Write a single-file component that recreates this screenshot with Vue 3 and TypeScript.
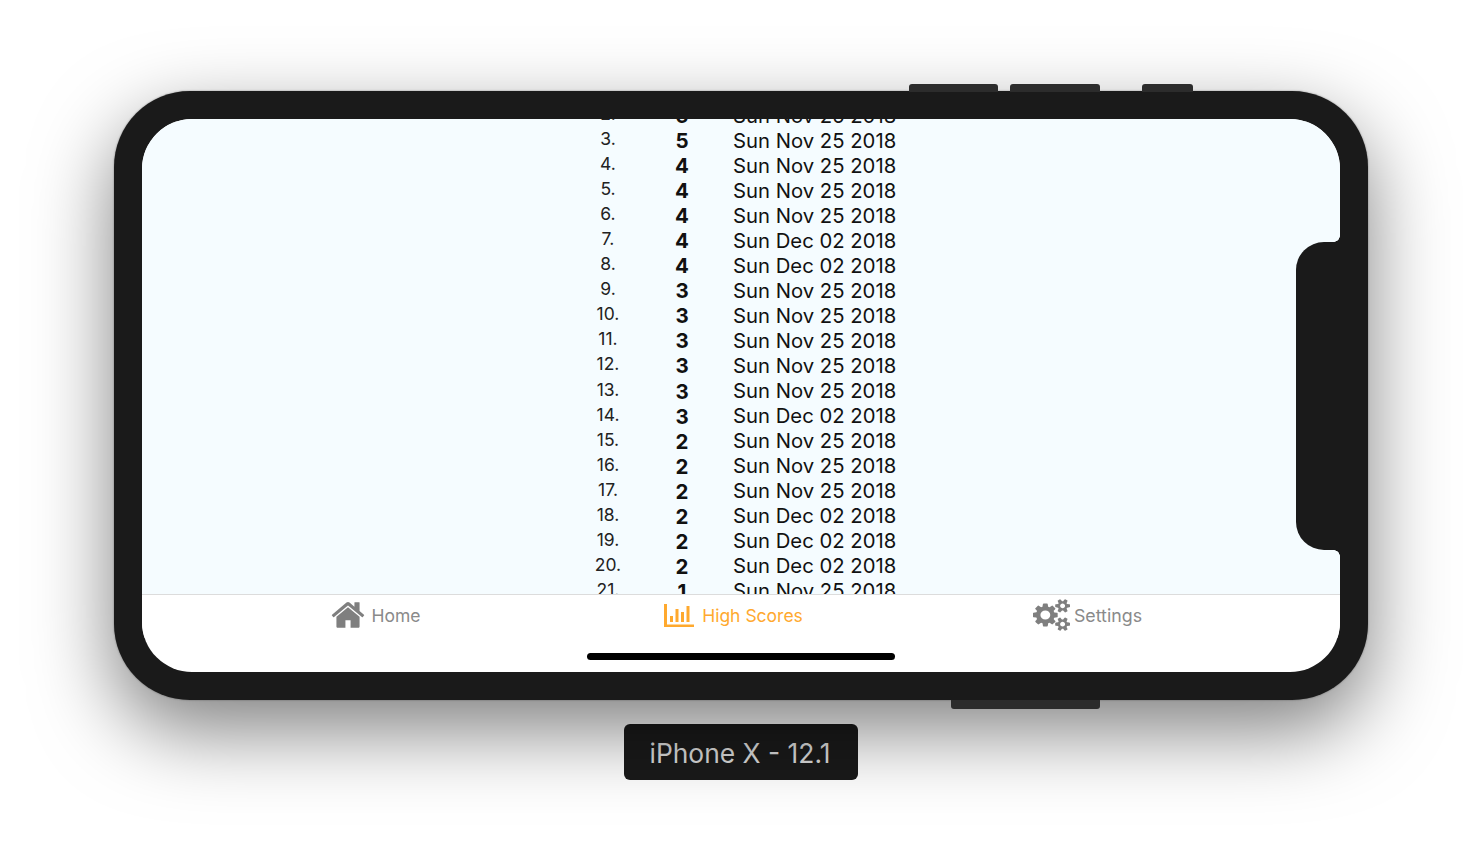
<script setup lang="ts">
interface Row { rank: number; score: number; date: string }
const nov = 'Sun Nov 25 2018'
const dec = 'Sun Dec 02 2018'
const rows: Row[] = [
  { rank: 2, score: 6, date: nov },
  { rank: 3, score: 5, date: nov },
  { rank: 4, score: 4, date: nov },
  { rank: 5, score: 4, date: nov },
  { rank: 6, score: 4, date: nov },
  { rank: 7, score: 4, date: dec },
  { rank: 8, score: 4, date: dec },
  { rank: 9, score: 3, date: nov },
  { rank: 10, score: 3, date: nov },
  { rank: 11, score: 3, date: nov },
  { rank: 12, score: 3, date: nov },
  { rank: 13, score: 3, date: nov },
  { rank: 14, score: 3, date: dec },
  { rank: 15, score: 2, date: nov },
  { rank: 16, score: 2, date: nov },
  { rank: 17, score: 2, date: nov },
  { rank: 18, score: 2, date: dec },
  { rank: 19, score: 2, date: dec },
  { rank: 20, score: 2, date: dec },
  { rank: 21, score: 1, date: nov },
]
</script>

<template>
  <main class="stage">
    <div class="device">
      <span class="btn btn-a"></span>
      <span class="btn btn-b"></span>
      <span class="btn btn-c"></span>
      <span class="btn-bottom"></span>
      <div class="screen">
        <div class="list">
          <div v-for="r in rows" :key="r.rank" class="row">
            <span class="rank">{{ r.rank }}.</span>
            <span class="score">{{ r.score }}</span>
            <span class="date">{{ r.date }}</span>
          </div>
        </div>
        <nav class="tabs">
          <div class="tab">
            <svg class="ico-home" viewBox="0 0 1792 1792"><path d="M1472 992v480q0 26-19 45t-45 19h-384v-384h-256v384h-384q-26 0-45-19t-19-45v-480q0-1 .5-3t.5-3l575-474 575 474q1 2 1 6zm223-69l-62 74q-8 9-21 11h-3q-13 0-21-7l-692-577-692 577q-12 8-24 7-13-2-21-11l-62-74q-8-10-7-23.5t11-21.5l719-599q32-26 76-26t76 26l244 204v-195q0-14 9-23t23-9h192q14 0 23 9t9 23v408l219 182q10 8 11 21.5t-7 23.5z"/></svg>
            <span>Home</span>
          </div>
          <div class="tab active">
            <svg class="ico-chart" viewBox="0 0 30 23"><path d="M0 0h3v20.5h27V23H0z"/><rect x="6" y="12" width="3" height="6"/><rect x="11.5" y="5" width="3" height="13"/><rect x="17" y="8" width="3" height="10"/><rect x="22.5" y="2" width="3" height="16"/></svg>
            <span>High Scores</span>
          </div>
          <div class="tab tab-settings">
            <svg class="ico-cogs" viewBox="0 0 1920 1792" preserveAspectRatio="none"><path d="M896 896q0-106-75-181t-181-75-181 75-75 181 75 181 181 75 181-75 75-181zm768 512q0-52-38-90t-90-38-90 38-38 90q0 53 37.5 90.5t90.5 37.5 90.5-37.5 37.5-90.5zm0-1024q0-52-38-90t-90-38-90 38-38 90q0 53 37.5 90.5t90.5 37.5 90.5-37.5 37.5-90.5zm-384 421v185q0 10-7 19.5t-16 10.5l-155 24q-11 35-32 76 34 48 90 115 7 11 7 20 0 12-7 19-23 30-82.5 89.5t-78.5 59.5q-11 0-21-7l-115-90q-37 19-77 31-11 108-23 155-7 24-30 24h-186q-11 0-20-7.5t-10-17.5l-23-153q-34-10-75-31l-118 89q-7 7-20 7-11 0-21-8-144-133-144-160 0-9 7-19 10-14 41-53t47-61q-23-44-35-82l-152-24q-10-1-17-9.5t-7-19.5v-185q0-10 7-19.5t16-10.5l155-24q11-35 32-76-34-48-90-115-7-11-7-20 0-12 7-20 22-30 82-89t79-59q11 0 21 7l115 90q34-18 77-32 11-108 23-154 7-24 30-24h186q11 0 20 7.5t10 17.5l23 153q34 10 75 31l118-89q8-7 20-7 11 0 21 8 144 133 144 160 0 8-7 19-12 16-42 54t-45 60q23 48 34 82l152 23q10 2 17 10.5t7 19.5zm640 533v140q0 16-149 31-12 27-30 52 51 113 51 138 0 4-4 7-122 71-124 71-8 0-46-47t-52-68q-20 2-30 2t-30-2q-14 21-52 68t-46 47q-2 0-124-71-4-3-4-7 0-25 51-138-18-25-30-52-149-15-149-31v-140q0-16 149-31 13-29 30-52-51-113-51-138 0-4 4-7 4-2 35-20t59-34 30-16q8 0 46 46.5t52 67.5q20-2 30-2t30 2q51-71 92-112l6-2q4 0 124 70 4 3 4 7 0 25-51 138 17 23 30 52 149 15 149 31zm0-1024v140q0 16-149 31-12 27-30 52 51 113 51 138 0 4-4 7-122 71-124 71-8 0-46-47t-52-68q-20 2-30 2t-30-2q-14 21-52 68t-46 47q-2 0-124-71-4-3-4-7 0-25 51-138-18-25-30-52-149-15-149-31v-140q0-16 149-31 13-29 30-52-51-113-51-138 0-4 4-7 4-2 35-20t59-34 30-16q8 0 46 46.5t52 67.5q20-2 30-2t30 2q51-71 92-112l6-2q4 0 124 70 4 3 4 7 0 25-51 138 17 23 30 52 149 15 149 31z"/></svg>
            <span>Settings</span>
          </div>
        </nav>
        <div class="home-strip"><span class="home-bar"></span></div>
        <div class="notch"></div>
      </div>
    </div>
    <div class="label">iPhone X - 12.1</div>
  </main>
</template>

<style>
html, body { margin: 0; background: #fff; overflow: hidden; }
</style>

<style scoped>
.stage {
  width: 1482px;
  height: 864px;
  box-sizing: border-box;
  padding-top: 91px;
  display: flex;
  flex-direction: column;
  align-items: center;
  font-family: Inter, "Liberation Sans", sans-serif;
}
.device {
  position: relative;
  width: 1254px;
  height: 609px;
  box-sizing: border-box;
  padding: 28px;
  background: #1a1a1a;
  border-radius: 76px;
  box-shadow: 0 30px 80px rgba(0, 0, 0, 0.5), 0 0 2px rgba(0, 0, 0, 0.4);
}
.btn {
  position: absolute;
  top: -7px;
  height: 8px;
  background: #2c2c2c;
  border-radius: 3px 3px 0 0;
}
.btn-a { left: 795px; width: 89px; }
.btn-b { left: 896px; width: 90px; }
.btn-c { left: 1028px; width: 51px; }
.btn-bottom {
  position: absolute;
  left: 837px;
  bottom: -9px;
  width: 149px;
  height: 9px;
  background: #2c2c2c;
  border-radius: 0 0 3px 3px;
}
.screen {
  position: relative;
  height: 553px;
  overflow: hidden;
  background: #fff;
  border-radius: 50px;
  display: flex;
  flex-direction: column;
}
.list {
  height: 475px;
  flex: none;
  overflow: hidden;
  background: #f5fcff;
  padding-left: 442px;
}
.row {
  display: grid;
  grid-template-columns: 48px 100px auto;
  height: 25.06px;
  align-items: center;
  position: relative;
  top: -16px;
  color: #000;
}
.rank {
  font-size: 17.5px;
  text-align: center;
  color: #222;
  margin-top: -4px;
}
.score {
  font-size: 20.5px;
  font-weight: 700;
  text-align: center;
  color: #111;
}
.date {
  font-size: 20.3px;
  padding-left: 1px;
  margin-top: -1px;
  white-space: nowrap;
  color: #111;
}
.tabs {
  height: 43px;
  flex: none;
  display: grid;
  grid-template-columns: repeat(3, 357px);
  padding-left: 56px;
  border-top: 1px solid #dcdcdc;
  background: #fff;
}
.tab {
  display: flex;
  align-items: center;
  justify-content: center;
  gap: 5px;
  color: #8a8a8a;
  font-size: 17.5px;
  height: 40px;
}
.tab svg { fill: #7f7f7f; flex: none; }
.tab.active { color: #ffa92e; }
.tab.active svg { fill: #ffa92e; }
.tab-settings { padding-right: 6px; gap: 4px; font-size: 17.8px; }
.ico-home { width: 36px; height: 36px; margin-left: -2px; }
.ico-chart { width: 30px; height: 23px; margin-right: 3px; }
.ico-cogs { width: 37px; height: 32px; }
.home-strip {
  flex: 1;
  display: flex;
  justify-content: center;
  padding-top: 15px;
}
.home-bar {
  width: 308px;
  height: 7px;
  background: #000;
  border-radius: 4px;
}
.notch {
  position: absolute;
  right: 0;
  top: 123px;
  width: 44px;
  height: 308px;
  background: #1a1a1a;
  border-radius: 28px 0 0 28px;
}
.notch::before,
.notch::after {
  content: "";
  position: absolute;
  right: 0;
  width: 6px;
  height: 6px;
  background: radial-gradient(circle at 0 0, transparent 5.5px, #1a1a1a 6px);
}
.notch::before { top: -6px; }
.notch::after { bottom: -6px; transform: scaleY(-1); }
.label {
  margin-top: 24px;
  width: 234px;
  height: 56px;
  padding: 2px 2px 0 0;
  box-sizing: border-box;
  display: flex;
  align-items: center;
  justify-content: center;
  background: #1a1a1a;
  color: #dcdcdc;
  border-radius: 6px;
  font-size: 26.4px;
  box-shadow: 0 0 0 1px rgba(255, 255, 255, 0.25);
}
</style>
